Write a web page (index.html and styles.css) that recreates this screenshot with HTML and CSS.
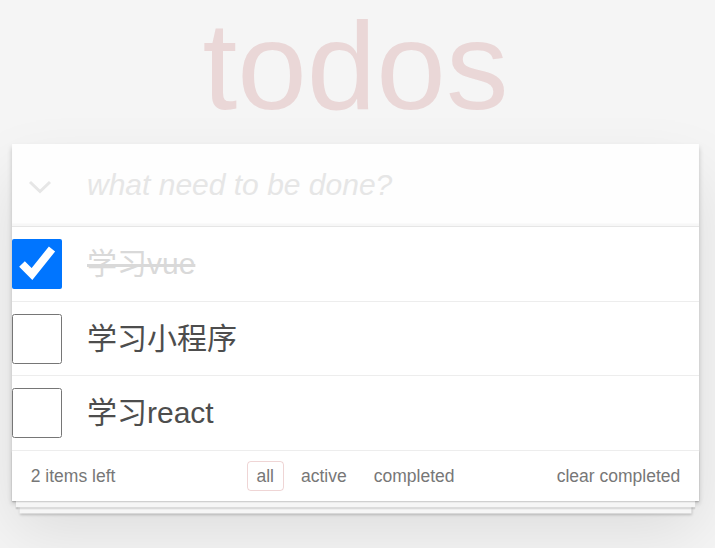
FILE: index.html
```html
<!DOCTYPE html>
<html lang="zh">
<head>
<meta charset="utf-8">
<title>todos</title>
<link rel="stylesheet" href="styles.css">
</head>
<body>
<section class="todoapp">
  <h1 class="title">todos</h1>
  <div class="card">
    <header class="header">
      <span class="toggle-all">
        <svg width="24" height="14" viewBox="0 0 24 14"><polyline points="2,2 12,11.5 22,2" fill="none" stroke="#e6e6e6" stroke-width="3"/></svg>
      </span>
      <input class="new-todo" placeholder="what need to be done?">
    </header>
    <ul class="todo-list">
      <li class="todo completed">
        <input class="toggle" type="checkbox" checked>
        <label class="todo-label">学习vue</label>
      </li>
      <li class="todo">
        <input class="toggle" type="checkbox">
        <label class="todo-label">学习小程序</label>
      </li>
      <li class="todo">
        <input class="toggle" type="checkbox">
        <label class="todo-label">学习react</label>
      </li>
    </ul>
    <footer class="footer">
      <span class="todo-count">2 items left</span>
      <ul class="filters"><li><a class="filter selected">all</a></li><li><a class="filter">active</a></li><li><a class="filter">completed</a></li></ul>
      <span class="clear-completed">clear completed</span>
    </footer>
  </div>
</section>
</body>
</html>
```

FILE: styles.css
```css
html, body {
  margin: 0;
  padding: 0;
}
html {
  background: #f5f5f5;
}
body {
  min-height: 548px;
  background: #f5f5f5;
  color: #4d4d4d;
  font-family: "Liberation Sans", Arial, "Noto Sans CJK SC", sans-serif;
  font-size: 17.5px;
  line-height: 1.4;
}
.todoapp {
  width: 687px;
  margin: 0 0 0 12px;
  padding-bottom: 47px;
}
.title {
  margin: 3px 0 0;
  font-size: 125px;
  line-height: 125px;
  font-weight: 400;
  text-align: center;
  color: rgba(175, 47, 47, 0.15);
}
.card {
  position: relative;
  z-index: 1;
  margin-top: 16px;
  background: #fff;
  box-shadow: 0 2.5px 5px 0 rgba(0, 0, 0, 0.2), 0 31px 62px 0 rgba(0, 0, 0, 0.1);
}
.header {
  position: relative;
  display: flex;
  align-items: center;
  box-shadow: inset 0 -2.5px 1.25px rgba(0, 0, 0, 0.03);
  background: rgba(0, 0, 0, 0.003);
}
.toggle-all {
  position: absolute;
  left: 16px;
  top: 36px;
  width: 24px;
  height: 14px;
  display: block;
}
.toggle-all svg {
  display: block;
}
.new-todo {
  flex: 1;
  box-sizing: border-box;
  height: 82px;
  margin: 0;
  padding: 20px 20px 20px 75px;
  border: none;
  outline: none;
  background: transparent;
  font-family: inherit;
  font-size: 30px;
  line-height: 42px;
  color: inherit;
}
.new-todo::placeholder {
  font-style: italic;
  color: #e6e6e6;
}
.todo-list {
  margin: 0;
  padding: 0;
  list-style: none;
  border-top: 1px solid #e6e6e6;
  background: #fff;
}
.todo {
  display: flex;
  align-items: center;
  border-bottom: 1px solid #ededed;
  height: 74px;
}
.todo:nth-child(2) {
  height: 73px;
}
.toggle {
  width: 50px;
  height: 50px;
  margin: 0;
  flex: none;
}
.todo-label {
  flex: 1;
  margin-left: 6px;
  padding: 0 20px 0 19px;
  font-size: 30px;
  line-height: 36px;
  color: #4d4d4d;
}
.completed .todo-label {
  color: #d9d9d9;
  text-decoration: line-through;
}
.footer {
  position: relative;
  display: grid;
  grid-template-columns: 1fr auto 1fr;
  align-items: center;
  height: 50px;
  padding: 0 18.75px;
  color: #777;
  font-size: 17.5px;
}
.footer::before {
  content: "";
  position: absolute;
  right: 0;
  bottom: 0;
  left: 0;
  height: 50px;
  overflow: hidden;
  box-shadow: 0 1.25px 1.25px rgba(0, 0, 0, 0.2),
    0 10px 0 -3.75px #f6f6f6,
    0 11.25px 1.25px -3.75px rgba(0, 0, 0, 0.2),
    0 20px 0 -7.5px #f6f6f6,
    0 21.25px 2.5px -7.5px rgba(0, 0, 0, 0.2);
}
.todo-count,
.filters,
.clear-completed {
  position: relative;
}
.todo-count {
  justify-self: start;
}
.filters {
  display: flex;
  margin: 0;
  padding: 0;
  list-style: none;
}
.filter {
  display: block;
  margin: 0 3.75px;
  padding: 1px 8.75px 0;
  line-height: 27px;
  border: 1.25px solid transparent;
  border-radius: 3.75px;
  color: inherit;
}
.filter.selected {
  border-color: rgba(175, 47, 47, 0.2);
}
.clear-completed {
  justify-self: end;
}
```
